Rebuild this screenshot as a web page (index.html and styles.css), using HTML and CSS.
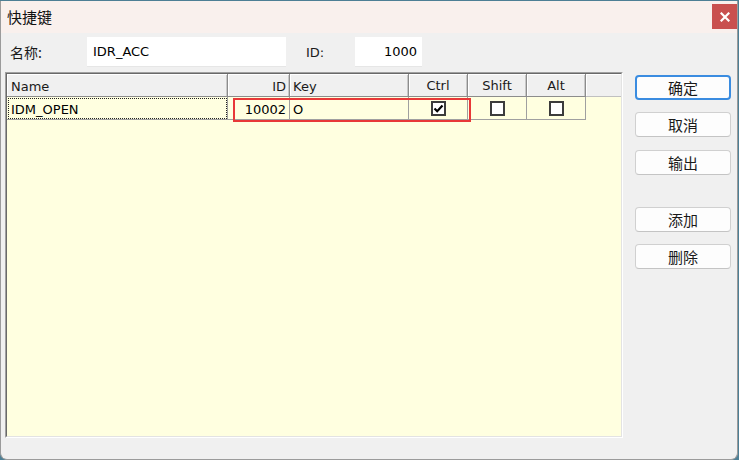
FILE: index.html
```html
<!DOCTYPE html>
<html lang="zh">
<head>
<meta charset="utf-8">
<title>快捷键</title>
<link rel="stylesheet" href="styles.css">
</head>
<body>
<div class="window">
  <div class="titlebar">
    <span class="title">快捷键</span>
    <div class="close">
      <svg width="10" height="10" viewBox="0 0 10 10"><path d="M1.5 1.5 L8.5 8.5 M8.5 1.5 L1.5 8.5" stroke="#fff" stroke-width="2.2" stroke-linecap="square"/></svg>
    </div>
  </div>
  <div class="client">
    <div class="toprow">
      <span class="lbl name-lbl">名称:</span>
      <div class="field name-field">IDR_ACC</div>
      <span class="lbl id-lbl">ID:</span>
      <div class="field id-field">1000</div>
    </div>
    <div class="main">
      <div class="grid-outer">
        <div class="grid">
          <div class="row head">
            <div class="cell c-name">Name</div>
            <div class="cell c-id">ID</div>
            <div class="cell c-key">Key</div>
            <div class="cell c-ctrl">Ctrl</div>
            <div class="cell c-shift">Shift</div>
            <div class="cell c-alt">Alt</div>
            <div class="cell c-fill"></div>
          </div>
          <div class="row data">
            <div class="cell c-name focus">IDM_OPEN</div>
            <div class="cell c-id">10002</div>
            <div class="cell c-key">O</div>
            <div class="cell c-ctrl"><span class="chk"><svg width="11" height="11" viewBox="0 0 11 11"><path d="M1.5 5.5 L4.2 8.2 L9.5 2.5" fill="none" stroke="#000" stroke-width="2.2"/></svg></span></div>
            <div class="cell c-shift"><span class="chk"></span></div>
            <div class="cell c-alt"><span class="chk"></span></div>
          </div>
          <div class="mark"></div>
        </div>
      </div>
      <div class="buttons">
        <button class="btn default">确定</button>
        <button class="btn b-cancel">取消</button>
        <button class="btn b-out">输出</button>
        <button class="btn b-add">添加</button>
        <button class="btn b-del">删除</button>
      </div>
    </div>
  </div>
</div>
</body>
</html>
```
FILE: styles.css
```css
* { box-sizing: border-box; }
html, body { margin: 0; padding: 0; }
body {
  width: 739px;
  height: 460px;
  background: #4d7f95;
  overflow: hidden;
  font-family: "DejaVu Sans", "Noto Sans CJK SC", sans-serif;
  font-size: 13px;
  color: #000;
}
.window {
  width: 738px;
  height: 459px;
  margin-top: 1px;
  background: #f0f0f0;
  border: 1px solid #9b9b9b;
  border-top: none;
  border-radius: 0 0 7px 7px;
  display: flex;
  flex-direction: column;
  overflow: hidden;
}
.titlebar {
  height: 32px;
  background: #f9f0ed;
  display: flex;
  align-items: center;
  justify-content: space-between;
  padding-left: 6px;
}
.title {
  font-family: "Noto Sans CJK SC", sans-serif;
  font-size: 15px;
  color: #111;
  line-height: 1;
  margin-top: -2px;
}
.close {
  width: 25px;
  height: 25px;
  background: #c9504f;
  display: flex;
  align-items: center;
  justify-content: center;
  align-self: flex-start;
  margin-top: 3px;
}
.client {
  flex: 1;
  padding: 4px 0 0 4px;
}
.toprow {
  height: 30px;
  display: flex;
  align-items: center;
}
.lbl {
  font-family: "Noto Sans CJK SC", sans-serif;
  font-size: 14px;
  color: #1a1a1a;
}
.name-lbl { margin-left: 5px; width: 77px; }
.id-lbl { font-family: "DejaVu Sans", sans-serif; font-size: 13px; margin-left: 20px; width: 49px; }
.field {
  height: 30px;
  background: #fff;
  border-bottom: 1px solid #e6e6e6;
  display: flex;
  align-items: center;
  font-size: 13px;
}
.name-field { width: 199px; padding-left: 6px; }
.id-field { width: 67px; justify-content: flex-end; padding-right: 5px; }
.main {
  margin-top: 5px;
  display: flex;
  align-items: flex-start;
}
.grid-outer {
  width: 618px;
  height: 366px;
  border: 1px solid;
  border-color: #a0a0a0 #ffffff #ffffff #a0a0a0;
}
.grid {
  position: relative;
  height: 100%;
  background: #ffffe0;
  border: 1px solid;
  border-color: #696969 #e3e3e3 #e3e3e3 #696969;
}
.row {
  display: flex;
  height: 23px;
}
.cell {
  height: 23px;
  border-right: 1px solid #a0a0a0;
  border-bottom: 1px solid #a0a0a0;
  display: flex;
  align-items: center;
  padding: 2px 4px 0;
  white-space: nowrap;
  flex: none;
}
.head .cell {
  background: #f0f0f0;
  color: #1a1a1a;
  box-shadow: inset 1px 1px 0 #ffffff, inset -1px 0 0 #c8c8c8;
  border-right-color: #8c8c8c;
  border-bottom-color: #8c8c8c;
}
.head .c-fill { border-right: none; box-shadow: inset 1px 1px 0 #ffffff; border-bottom-color: #c0c0c0; }
.c-name { width: 221px; }
.c-id { width: 62px; justify-content: flex-end; padding-right: 3px; }
.c-key { width: 119px; padding-left: 3px; }
.c-ctrl, .c-shift, .c-alt { width: 59px; justify-content: center; padding-top: 0; }
.c-fill { flex: 1; }
.focus { outline: 1px dotted #222; outline-offset: -2px; }
.chk {
  width: 15px;
  height: 15px;
  border: 2px solid #3c3c3c;
  background: #fff;
  display: flex;
  align-items: center;
  justify-content: center;
}
.mark {
  position: absolute;
  left: 226px;
  top: 24px;
  width: 238px;
  height: 24px;
  border: 2px solid #e83838;
}
.buttons {
  margin-left: 12px;
  padding-top: 3px;
  width: 96px;
  display: flex;
  flex-direction: column;
}
.btn {
  height: 25px;
  width: 96px;
  background: #fdfdfd;
  border: 1px solid #d0d0d0;
  border-bottom-color: #c4c4c4;
  border-radius: 4px;
  font-family: "Noto Sans CJK SC", sans-serif;
  font-size: 15px;
  color: #1a1a1a;
  padding: 0;
  line-height: 1;
}
.btn.default {
  border: 2px solid #3a8ce0;
}
.b-cancel { margin-top: 12px; }
.b-out { margin-top: 13px; }
.b-add { margin-top: 32px; }
.b-del { margin-top: 12px; }
```
